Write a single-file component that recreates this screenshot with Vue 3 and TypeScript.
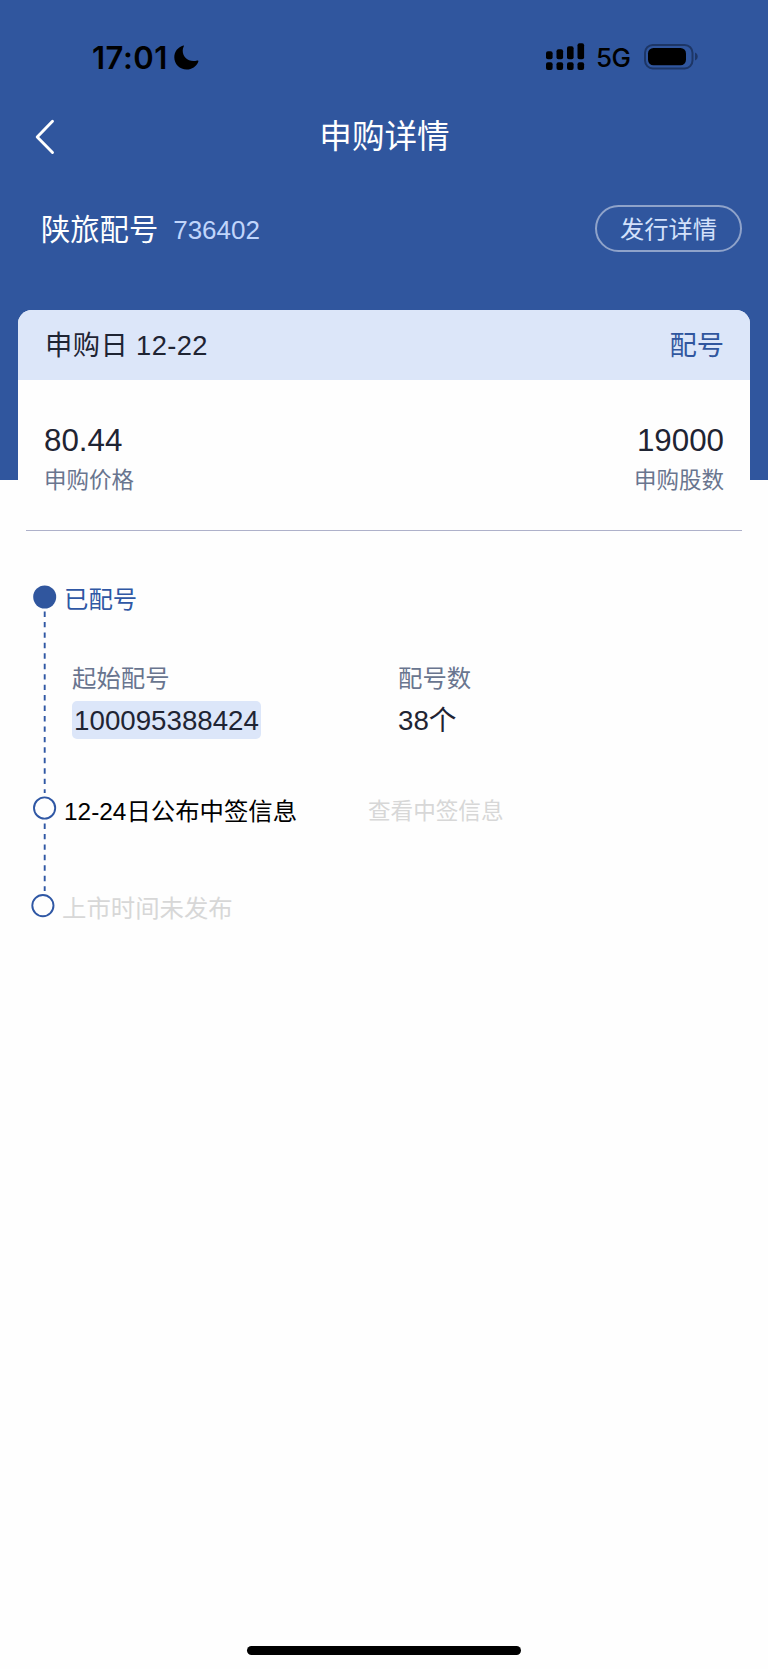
<script setup lang="ts">
interface Stat {
  value: string
  label: string
}

interface Allotment {
  label: string
  value: string
  highlighted: boolean
}

const stats: Stat[] = [
  { value: '80.44', label: '申购价格' },
  { value: '19000', label: '申购股数' },
]

const allotments: Allotment[] = [
  { label: '起始配号', value: '100095388424', highlighted: true },
  { label: '配号数', value: '38个', highlighted: false },
]

const signalBars: number[] = [8, 10, 13, 16]
</script>

<template>
  <div class="screen">
    <header class="status">
      <div class="status-left">
        <span class="clock">17:01</span>
        <svg class="moon" width="25" height="25" viewBox="0 0 25 25">
          <path d="M9.400 .4C3.900 1.900 .3 6.600 .3 12.200c0 6.800 5.500 12.300 12.400 12.300 5.200 0 9.700-3.100 11.600-7.800.3-.9-.3-1.500-1.100-1.200-1.300.4-2.500.6-3.800.6C13.200 16.100 8.700 11.600 8.700 5.600c0-1.400.4-2.900 1-4 .4-.7.3-1.300-.3-1.200z" />
        </svg>
      </div>
      <div class="status-right">
        <svg class="signal" width="39" height="28" viewBox="0 0 39 28">
          <template v-for="(bar, i) in signalBars" :key="i">
            <rect :x="i * 10.5" :y="16.2 - bar" width="6.600" :height="bar" rx="2" />
            <rect :x="i * 10.5" y="19.300" width="6.600" height="7.600" rx="2" />
          </template>
        </svg>
        <span class="network">5G</span>
        <svg class="battery" width="55" height="26" viewBox="0 0 55 26">
          <rect x="1" y="1" width="47.500" height="23.400" rx="7.800" fill="none" stroke="#1d3666" stroke-width="2" />
          <rect x="4" y="4" width="38" height="17.300" rx="5.500" />
          <path d="M51 8.600c1.700.7 2.700 2.200 2.700 4s-1 3.300-2.700 4z" fill="#1d3666" />
        </svg>
      </div>
    </header>

    <nav class="nav">
      <svg class="back" width="20" height="36" viewBox="0 0 20 36">
        <path d="M17.500 2.300 2.200 18 17.500 33.500" fill="none" stroke="#fff" stroke-width="2.900" stroke-linecap="round" stroke-linejoin="round" />
      </svg>
      <h1 class="title">申购详情</h1>
    </nav>

    <section class="stock">
      <span class="stock-name">陕旅配号</span>
      <span class="stock-code">736402</span>
      <button class="detail-button" type="button">发行详情</button>
    </section>

    <main class="card">
      <div class="card-head">
        <span class="card-date">申购日 12-22</span>
        <span class="card-state">配号</span>
      </div>
      <div class="stats">
        <div v-for="stat in stats" :key="stat.label" class="stat">
          <div class="stat-value">{{ stat.value }}</div>
          <div class="stat-label">{{ stat.label }}</div>
        </div>
      </div>
      <div class="divider"></div>

      <div class="timeline">
        <svg class="rail" width="26" height="336" viewBox="0 0 26 336">
          <g fill="none" stroke="#2f57a4" stroke-width="1.900">
            <path d="M13.700 26.500V208" stroke-dasharray="5.400 5.050" />
            <path d="M13.700 238.500V306" stroke-dasharray="5.400 5.050" />
            <circle cx="13.600" cy="223" r="10.600" />
            <circle cx="11.900" cy="320.600" r="10.600" />
          </g>
          <circle cx="13.700" cy="12" r="11.500" fill="#30569e" />
        </svg>
        <div class="steps">
          <div class="step step-done">已配号</div>
          <div class="allotments">
            <div v-for="item in allotments" :key="item.label" class="allotment">
              <div class="allotment-label">{{ item.label }}</div>
              <div class="allotment-value" :class="{ highlighted: item.highlighted }">{{ item.value }}</div>
            </div>
          </div>
          <div class="step step-next">
            <span class="notice">12-24日公布中签信息</span>
            <span class="check-link">查看中签信息</span>
          </div>
          <div class="step step-pending">上市时间未发布</div>
        </div>
      </div>
    </main>

    <div class="home-indicator"></div>
  </div>
</template>

<style>
body {
  margin: 0;
  background: #fff;
}
</style>

<style scoped>
.screen {
  box-sizing: border-box;
  width: 768px;
  height: 1669px;
  display: flex;
  flex-direction: column;
  background: linear-gradient(#30569e 480.500px, #fefefe 480.500px);
  font-family: "Liberation Sans", "Noto Sans CJK SC", sans-serif;
  color: #1f2433;
  white-space: nowrap;
  overflow: hidden;
}

.status {
  height: 107px;
  box-sizing: border-box;
  padding: 42px 69px 0 92px;
  display: flex;
  justify-content: space-between;
  align-items: flex-start;
  color: #000;
  font-family: Inter, sans-serif;
}

.status-left,
.status-right {
  display: flex;
  align-items: flex-start;
}

.clock {
  width: 82px;
  font-size: 31px;
  font-weight: 600;
  line-height: 31px;
  letter-spacing: 0.500px;
}

.moon {
  margin-top: 3px;
}

.signal {
  margin-top: 1px;
}

.network {
  width: 36px;
  margin-left: 11px;
  margin-right: 12px;
  font-size: 26px;
  font-weight: 500;
  line-height: 32px;
  letter-spacing: -0.500px;
}

.battery {
  margin-top: 2px;
}

.nav {
  height: 60px;
  display: grid;
  grid-template-columns: 60px 1fr 60px;
  align-items: center;
}

.back {
  margin-left: 35px;
}

.title {
  margin: 0;
  padding-left: 1px;
  text-align: center;
  font-size: 32.600px;
  font-weight: 400;
  line-height: 40px;
  color: #fff;
}

.stock {
  height: 126px;
  padding: 0 26px 0 41px;
  display: flex;
  align-items: center;
}

.stock-name {
  font-size: 29.300px;
  line-height: 40px;
  color: #fff;
}

.stock-code {
  margin-left: 15px;
  font-size: 26px;
  line-height: 42px;
  color: #c0d5fb;
}

.detail-button {
  margin-left: auto;
  box-sizing: border-box;
  width: 147px;
  height: 47px;
  margin-top: -3px;
  padding: 2px 0 0;
  border: 2px solid #8fa3ca;
  border-radius: 24px;
  background: none;
  color: #d3e1fb;
  font-family: inherit;
  font-size: 24.300px;
  line-height: 42px;
}

.card {
  width: 732px;
  margin: 16.500px auto 0;
  border-radius: 14px 14px 0 0;
  background: #fefefe;
  overflow: hidden;
}

.card-head {
  height: 70px;
  box-sizing: border-box;
  padding: 2px 26px 0 27px;
  display: flex;
  justify-content: space-between;
  align-items: center;
  background: #dce6f9;
  font-size: 27.300px;
  line-height: 40px;
}

.card-date {
  letter-spacing: 0.400px;
}

.card-state {
  color: #30569e;
}

.stats {
  height: 150px;
  box-sizing: border-box;
  padding: 41px 26px 0;
  display: flex;
  justify-content: space-between;
}

.stat:last-child {
  text-align: right;
}

.stat-value {
  font-size: 31.300px;
  line-height: 40px;
}

.stat-label {
  font-size: 22.500px;
  line-height: 40px;
  color: #69758f;
}

.divider {
  height: 1px;
  margin: 0 8px 0 8px;
  background: #aeb1ca;
}

.timeline {
  padding: 54px 13px 0;
  display: flex;
}

.rail {
  flex: none;
}

.steps {
  flex: 1;
  font-size: 24.400px;
}

.step {
  height: 30px;
  padding-left: 7px;
  line-height: 30px;
}

.step-done {
  color: #2f57a4;
}

.allotments {
  margin: 48px 0 0 15px;
  display: flex;
}

.allotment {
  width: 326px;
}

.allotment-label {
  height: 38px;
  line-height: 32px;
  color: #69758f;
}

.allotment-value {
  height: 38px;
  width: max-content;
  font-size: 27.700px;
  line-height: 39px;
}

.highlighted {
  box-sizing: border-box;
  width: 189px;
  border-radius: 5px;
  background: #dce6f9;
  text-align: center;
}

.step-next {
  margin-top: 58px;
  display: flex;
  color: #000;
}

.notice {
  width: 304px;
}

.check-link {
  font-size: 22.600px;
  color: #d7d7d7;
}

.step-pending {
  margin-top: 67px;
  padding-left: 5px;
  color: #d7d7d7;
}

.home-indicator {
  width: 274px;
  height: 9px;
  margin: auto auto 14px;
  border-radius: 5px;
  background: #000;
}
</style>
